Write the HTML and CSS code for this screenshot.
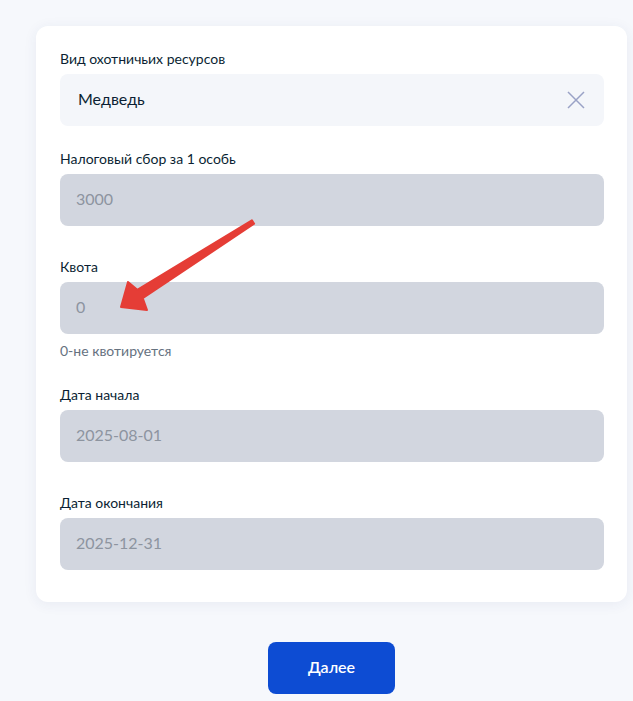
FILE: index.html
```html
<!DOCTYPE html>
<html lang="ru">
<head>
<meta charset="utf-8">
<link rel="stylesheet" href="styles.css">
</head>
<body>
<div class="page">
  <div class="card">
    <div class="field field--first">
      <div class="label">Вид охотничьих ресурсов</div>
      <div class="input input--select">
        <span class="value">Медведь</span>
        <svg class="clear" width="18" height="18" viewBox="0 0 18 18"><path d="M1 1L17 17M17 1L1 17" stroke="#9aa2c6" stroke-width="1.5" fill="none"/></svg>
      </div>
    </div>
    <div class="field field--mid">
      <div class="label">Налоговый сбор за 1 особь</div>
      <div class="input input--disabled"><span class="value">3000</span></div>
    </div>
    <div class="field field--hinted">
      <div class="label">Квота</div>
      <div class="input input--disabled"><span class="value">0</span></div>
      <div class="hint">0-не квотируется</div>
    </div>
    <div class="field field--mid">
      <div class="label">Дата начала</div>
      <div class="input input--disabled"><span class="value">2025-08-01</span></div>
    </div>
    <div class="field field--last">
      <div class="label">Дата окончания</div>
      <div class="input input--disabled"><span class="value">2025-12-31</span></div>
    </div>
  </div>
  <div class="actions">
    <button class="btn">Далее</button>
  </div>
</div>
<svg class="arrow" width="633" height="701" viewBox="0 0 633 701">
  <polygon points="251.9,220.3 137.3,289.8 128,282 121,307 147,310 142.7,298.2 254.1,223.7" fill="#e53d36" stroke="#e53d36" stroke-width="2" stroke-linejoin="round"/>
</svg>
</body>
</html>
```
FILE: styles.css
```css
html, body {
  margin: 0;
  padding: 0;
}
body {
  background: #f6f8fc;
  font-family: Lato, "Noto Sans", sans-serif;
  color: #0b1f33;
  width: 633px;
  height: 701px;
  overflow: hidden;
  position: relative;
}
.page {
  padding: 26px 6px 0 36px;
}
.card {
  background: #ffffff;
  border-radius: 12px;
  box-shadow: 0 2px 14px rgba(40, 60, 120, 0.07);
  padding: 24px 23px 32px 24px;
}
.field {
  display: flex;
  flex-direction: column;
}
.field--first { margin-bottom: 24px; }
.field--mid { margin-bottom: 32px; }
.field--hinted { margin-bottom: 25px; }
.label {
  font-size: 14px;
  line-height: 20px;
  margin-top: -1px;
  margin-bottom: 5px;
  color: #0b1f33;
}
.input {
  height: 52px;
  border-radius: 8px;
  display: flex;
  align-items: center;
  padding: 0 16px 3px;
  box-sizing: border-box;
  font-size: 16px;
}
.input--select {
  background: #f4f6fa;
  justify-content: space-between;
  padding-left: 18px;
  padding-right: 19px;
}
.input--select .clear {
  margin-top: 3px;
}
.input--select .value {
  color: #0b1f33;
}
.input--disabled {
  background: #d2d6df;
}
.input--disabled .value {
  color: #8d949f;
}
.hint {
  font-size: 14px;
  line-height: 20px;
  margin-top: 7px;
  color: #66727f;
}
.actions {
  display: flex;
  justify-content: center;
  padding-top: 40px;
}
.btn {
  width: 127px;
  height: 52px;
  background: #0d4cd3;
  color: #ffffff;
  border: none;
  border-radius: 8px;
  padding: 0 0 3px;
  font-family: Lato, "Noto Sans", sans-serif;
  font-size: 16px;
  font-weight: 600;
}
.arrow {
  position: absolute;
  left: 0;
  top: 0;
  pointer-events: none;
}
```
